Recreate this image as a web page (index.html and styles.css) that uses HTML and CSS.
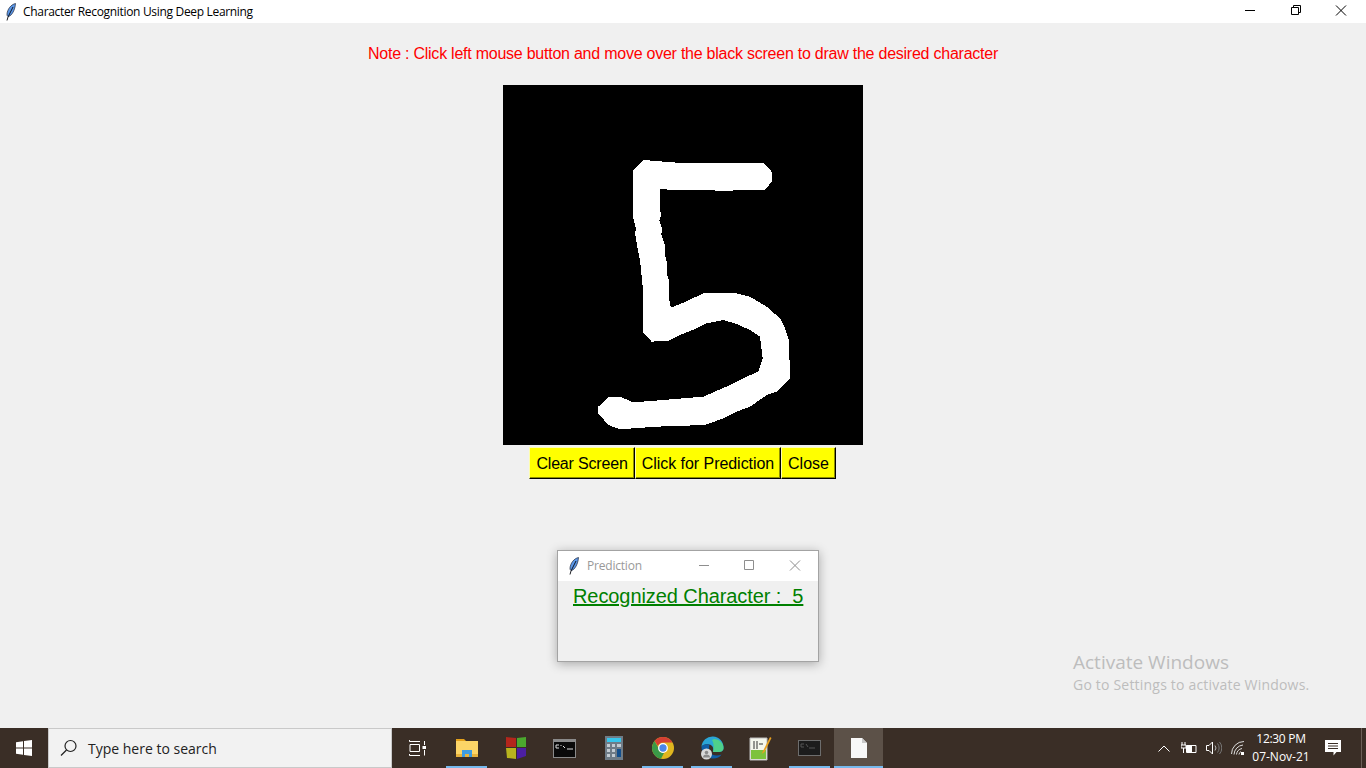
FILE: index.html
```html
<!doctype html>
<html lang="en">
  <head>
    <meta charset="utf-8">
    <title>Character Recognition Using Deep Learning</title>
    <link rel="stylesheet" href="styles.css">
  </head>
  <body>
    <svg class="defs" width="0" height="0">
      <defs>
        <symbol id="feather" viewBox="0 0 12 18">
          <path d="M10.500 .5C6 1.500 2.500 6 2 11C1.900 12.500 2.500 13.500 3.500 13.500C7 12.500 10 7 10.500 .5Z" fill="#5b97e8" stroke="#23283a" stroke-width=".7"/>
          <path d="M8 4L3 14L2 17.500" fill="none" stroke="#05070c" stroke-width=".9"/>
        </symbol>
      </defs>
    </svg>

    <header class="titlebar">
      <svg class="feather" width="12" height="18"><use href="#feather"/></svg>
      <span class="title-text">Character Recognition Using Deep Learning</span>
      <div class="win-controls">
        <svg width="46" height="23" viewBox="0 0 46 23"><path d="M19 10.500H29" stroke="#000" fill="none"/></svg>
        <svg width="46" height="23" viewBox="0 0 46 23"><path d="M19.500 7.500h7v7h-7zM21.500 7.500v-2h7v7h-2" stroke="#000" fill="none"/></svg>
        <svg width="46" height="23" viewBox="0 0 46 23"><path d="M18 5.500L28 15.500M28 5.500L18 15.500" stroke="#000" fill="none"/></svg>
      </div>
    </header>

    <main class="app">
      <p class="note">Note : Click left mouse button and move over the black screen to draw the desired character</p>
      <div class="canvas">
        <svg class="digit" width="210" height="290" viewBox="0 0 630 870" shape-rendering="crispEdges">
          <path fill="#fff" d="M160 30L285 40L415 40L520 38L545 65L545 95L525 120L400 122L290 120L210 118L210 180L214 195L208 210L216 235L214 255L225 285L224 310L232 345L230 370L238 395L236 430L240 465L245 472L280 458L340 430L440 430L480 440L530 470L570 505L585 535L597 570L600 685L560 725L530 735L480 770L440 785L400 805L345 825L200 830L90 838L55 825L25 790L25 770L55 742L95 742L130 757L220 750L340 740L420 705L470 680L505 665L518 625L510 560L480 540L440 522L400 510L350 520L320 535L270 555L235 572L185 575L160 548L160 430L150 330L140 280L135 250L138 238L130 205L130 60Z"/>
        </svg>
      </div>
      <div class="btn-row">
        <button class="btn btn-clear">Clear Screen</button>
        <button class="btn btn-predict">Click for Prediction</button>
        <button class="btn btn-close">Close</button>
      </div>
    </main>

    <section class="dialog">
      <div class="dialog-bar">
        <svg class="feather" width="12" height="18"><use href="#feather"/></svg>
        <span class="dialog-title">Prediction</span>
        <div class="win-controls">
          <svg width="45" height="30" viewBox="0 0 45 30"><path d="M16 14.500H26" stroke="#8e8e8e" fill="none"/></svg>
          <svg width="45" height="30" viewBox="0 0 45 30"><path d="M16.500 9.500h9v9h-9z" stroke="#8e8e8e" fill="none"/></svg>
          <svg width="45" height="30" viewBox="0 0 45 30"><path d="M17 9.500L27 19.500M27 9.500L17 19.500" stroke="#8e8e8e" fill="none"/></svg>
        </div>
      </div>
      <p class="result">Recognized Character :  5</p>
    </section>

    <div class="watermark">
      <div class="wm-big">Activate Windows</div>
      <div class="wm-small">Go to Settings to activate Windows.</div>
    </div>

    <footer class="taskbar">
      <div class="start">
        <svg width="16" height="16" viewBox="0 0 16 16"><path fill="#fff" d="M0 2.300L7 1.300V7.500H0zM8 1.100L16 0V7.500H8zM0 8.500H7V14.700L0 13.700zM8 8.500H16V16L8 14.900z"/></svg>
      </div>
      <div class="search">
        <svg width="18" height="18" viewBox="0 0 18 18"><circle cx="10.500" cy="7" r="5.500" fill="none" stroke="#222" stroke-width="1.200"/><path d="M6.500 11L1 16.500" stroke="#222" stroke-width="1.300"/></svg>
        <span>Type here to search</span>
      </div>
      <div class="task-view">
        <svg width="17" height="16" viewBox="0 0 17 16"><path d="M.5 0V1.500H11M.5 15.500H11M.5 14V15.500M1 4.500H10.500V11.500H1zM15.500 1V5M15.500 10V15.500" fill="none" stroke="#fff"/><rect x="13.500" y="6" width="3.500" height="3" fill="#fff"/></svg>
      </div>

      <div class="slot running">
        <svg width="22" height="20" viewBox="0 0 22 20"><path d="M0 1h8l2 2H0z" fill="#e4a11b"/><rect y="3" width="22" height="16" fill="#fcd567"/><rect y="16" width="22" height="3" fill="#e7b23c"/><path d="M6 19v-7h10v7h-3v-3H9v3z" fill="#3f9ce0"/></svg>
      </div>
      <div class="slot">
        <svg width="22" height="24" viewBox="0 0 22 24"><path d="M1 1L11 2V11H1z" fill="#b3261c"/><path d="M12 2L21 1V11H12z" fill="#4ba82e"/><path d="M1 12H11V23L2 22z" fill="#b8b41e"/><path d="M12 12H21V20L12 23z" fill="#4c1fa3"/></svg>
      </div>
      <div class="slot">
        <svg width="23" height="19" viewBox="0 0 23 19"><rect width="23" height="19" fill="#8a8a8a"/><rect x="1" y="3" width="21" height="15" fill="#0a0a0a"/><path d="M3 6h3M3 6v3h3M8 6v1M8 9v0M10 7l2 2M14 10h6" stroke="#ddd" fill="none"/></svg>
      </div>
      <div class="slot">
        <svg width="18" height="24" viewBox="0 0 18 24"><rect width="18" height="24" fill="#6f7c87"/><rect x="2" y="2" width="14" height="4" fill="#38c6ec"/><path d="M2 8h3v3H2zM7 8h3v3H7zM2 13h3v3H2zM7 13h3v3H7zM2 18h3v3H2zM7 18h3v3H7zM12 8h4v3h-4z" fill="#c3ccd3"/><rect x="12" y="13" width="4" height="8" fill="#134f8c"/></svg>
      </div>
      <div class="slot running">
        <svg width="22" height="22" viewBox="0 0 22 22"><circle cx="11" cy="11" r="11" fill="#e0b61f"/><path d="M11 0A11 11 0 0 1 20.500 5.500H11A5.500 5.500 0 0 0 5.900 9L2.500 4A11 11 0 0 1 11 0Z" fill="#d53f33"/><path d="M2.500 4L6.500 11A5 5 0 0 0 12 16L9 21.800A11 11 0 0 1 2.500 4Z" fill="#3a9a48"/><circle cx="11" cy="11" r="4.300" fill="#4a86e8" stroke="#fff" stroke-width="1.300"/></svg>
      </div>
      <div class="slot running">
        <svg width="24" height="24" viewBox="0 0 24 24"><path d="M1.500 11A11 11 0 0 1 23.500 12C23.500 15 21 16 18 16H13C14 13 13 9 9 8.500C5 8 2.500 9 1.500 11Z" fill="#2aa5d6"/><path d="M14 3C19 3 23.500 7 23.500 12C23.500 15 21 16 18 16H13C14 13 14 7 12 4Z" fill="#4fd08a"/><path d="M1.500 11C1.500 17 6 22.500 13 22.500C17 22.500 20 21 21.500 18.500C18 20 12 20 10 16C8 12 10 9 9 8.500C5 8 2.500 9 1.500 11Z" fill="#0f5fa8"/><circle cx="6.500" cy="18" r="5.500" fill="#d8d8d8"/><circle cx="6.500" cy="16.500" r="1.800" fill="#8a8a8a"/><path d="M3 21.500a3.500 3 0 0 1 7 0z" fill="#8a8a8a"/></svg>
      </div>
      <div class="slot">
        <svg width="23" height="25" viewBox="0 0 23 25"><path d="M1 2H18V24H1z" fill="#f4f6ec" stroke="#bbb"/><path d="M2 14H17V23H2z" fill="#7dc23c"/><path d="M5 5v8M8 5v8M10 8h4" stroke="#333" fill="none"/><path d="M21 1L14 15L12.500 18L15.500 16L22.500 2Z" fill="#e8a01f"/></svg>
      </div>
      <div class="slot running">
        <svg width="23" height="16" viewBox="0 0 23 16"><rect x=".5" y=".5" width="22" height="15" fill="#1c1c1c" stroke="#6d6d6d"/><path d="M3 4h3M3 4v3h3M8 4l2 3M11 8h6" stroke="#555" fill="none"/></svg>
      </div>
      <div class="slot active">
        <svg width="16" height="20" viewBox="0 0 16 20"><path d="M0 0H11L16 5V20H0z" fill="#f8f8f8"/><path d="M11 0L16 5H11z" fill="#c9c9c9"/></svg>
      </div>

      <div class="tray">
        <svg class="tray-caret" width="12" height="7" viewBox="0 0 12 7"><path d="M.5 6.500L6 1L11.500 6.500" fill="none" stroke="#fff"/></svg>
        <svg class="tray-battery" width="16" height="12" viewBox="0 0 16 12"><path d="M5.500 3.500h9.500v7H5.500z" fill="none" stroke="#fff"/><rect x="6" y="4" width="5" height="6" fill="#fff"/><path d="M1 3V0M4 3V0M0 3h5v3H0zM2.500 6v5" stroke="#fff" fill="none"/></svg>
        <svg class="tray-sound" width="16" height="14" viewBox="0 0 16 14"><path d="M.5 4.500h2.500L6.500 1v12L3 9.500H.5z" fill="none" stroke="#fff"/><path d="M9 4.500a4 4 0 0 1 0 5" fill="none" stroke="#bbb"/><path d="M11.500 2.500a7 7 0 0 1 0 9M13.500 1a9 9 0 0 1 0 12" fill="none" stroke="#777"/></svg>
        <svg class="tray-wifi" width="14" height="14" viewBox="0 0 14 14"><path d="M.5 13A12.500 12.500 0 0 1 13 .5M3 13.500A10 10 0 0 1 12 4M5.500 13.500A7 7 0 0 1 11 7.500M8 13.500A4 4 0 0 1 10 10.500" fill="none" stroke="#ddd"/><rect x="10" y="11" width="3" height="3" fill="#fff"/></svg>
        <div class="clock">
          <div class="clock-time">12:30 PM</div>
          <div>07-Nov-21</div>
        </div>
        <svg class="tray-notify" width="16" height="16" viewBox="0 0 16 16"><path d="M0 0H16V12H11.500L8.500 15.500V12H0z" fill="#fff"/><path d="M3 3.500H13M3 6H13M3 8.500H13" stroke="#3b2f27"/></svg>
        <div class="show-desktop"></div>
      </div>
    </footer>
  </body>
</html>
```

FILE: styles.css
```css
* {
  box-sizing: border-box;
}
body {
  margin: 0;
  width: 1366px;
  height: 768px;
  overflow: hidden;
  position: relative;
  background: #f0f0f0;
  font-family: "Liberation Sans", Arial, sans-serif;
  display: flex;
  flex-direction: column;
}
.defs {
  position: absolute;
}
.titlebar {
  height: 23px;
  flex: none;
  background: #fff;
  display: flex;
  align-items: center;
  padding: 0 2px 0 5px;
}
.title-text {
  margin-left: 6px;
  font: 12px "Open Sans", sans-serif;
  letter-spacing: -0.32px;
  color: #000;
}
.win-controls {
  margin-left: auto;
  display: flex;
}
.win-controls svg {
  display: block;
}
.app {
  flex: 1;
  display: flex;
  flex-direction: column;
  align-items: center;
}
.note {
  margin: 22px 0 22px;
  font-size: 16px;
  line-height: 18px;
  letter-spacing: -0.24px;
  color: #f00;
}
.canvas {
  width: 360px;
  height: 360px;
  background: #000;
  padding: 65px 0 0 87px;
}
.digit {
  display: block;
}
.btn-row {
  margin-top: 2px;
  margin-left: -1px;
  display: flex;
}
.btn {
  height: 32px;
  padding: 2px 0 0;
  background: #ff0;
  color: #000;
  border: 0;
  border-top: 1px solid #fdfdb0;
  border-left: 1px solid #fdfdb0;
  border-right: 1px solid #000;
  border-bottom: 1px solid #000;
  box-shadow: inset -1px -1px 0 #8f8f00;
  font: 16px "Liberation Sans", Arial, sans-serif;
}
.btn-clear {
  width: 106px;
  letter-spacing: -0.18px;
}
.btn-predict {
  width: 146px;
  letter-spacing: -0.05px;
}
.btn-close {
  width: 55px;
}
.dialog {
  position: absolute;
  left: 557px;
  top: 550px;
  width: 262px;
  height: 112px;
  background: #f0f0f0;
  border: 1px solid #a3a3a3;
  box-shadow: 0 2px 10px rgba(0,0,0,0.3);
}
.dialog-bar {
  height: 30px;
  background: #fff;
  display: flex;
  align-items: center;
  padding-left: 10px;
}
.dialog-title {
  margin-left: 7px;
  margin-top: -1px;
  font: 12px "Open Sans", sans-serif;
  letter-spacing: -0.2px;
  color: #999;
}
.result {
  margin: 3px 0 0 15px;
  font-size: 20px;
  line-height: 24px;
  letter-spacing: -0.08px;
  color: #008000;
  text-decoration: underline;
  white-space: pre;
}
.watermark {
  position: absolute;
  left: 1073px;
  top: 650px;
  color: #bdbdbd;
  font-family: "Open Sans", sans-serif;
}
.wm-big {
  font-size: 19px;
  line-height: 25px;
}
.wm-small {
  font-size: 14px;
  line-height: 20px;
  letter-spacing: 0.2px;
}
.taskbar {
  height: 40px;
  flex: none;
  background: #3a2e26;
  display: flex;
  align-items: stretch;
}
.start {
  flex: none;
  width: 48px;
  display: flex;
  align-items: center;
  justify-content: center;
}
.search {
  flex: none;
  width: 344px;
  background: #f2f2f2;
  border: 1px solid #c9c9c9;
  display: flex;
  align-items: center;
  padding-left: 11px;
  gap: 10px;
  font: 14px "Open Sans", sans-serif;
  color: #222;
}
.task-view {
  flex: none;
  width: 50px;
  display: flex;
  align-items: center;
  justify-content: center;
}
.slot {
  flex: none;
  width: 49px;
  display: flex;
  align-items: center;
  justify-content: center;
  position: relative;
}
.slot.running::after,
.slot.active::after {
  content: "";
  position: absolute;
  left: 4px;
  right: 4px;
  bottom: 0;
  height: 2px;
  background: #76b9ed;
}
.slot.active {
  background: #5c5148;
}
.slot.active::after {
  left: 0;
  right: 0;
}
.tray {
  flex: 1;
  display: flex;
  align-items: center;
  padding-left: 275px;
  color: #fff;
}
.tray-battery {
  margin-left: 11px;
}
.tray-sound {
  margin-left: 9px;
}
.tray-wifi {
  margin-left: 9px;
}
.clock {
  width: 70px;
  margin-left: 1px;
  text-align: center;
  font: 12px/18px "Open Sans", sans-serif;
}
.clock-time {
  letter-spacing: -0.3px;
}
.tray-notify {
  margin-left: 9px;
}
.show-desktop {
  margin-left: 20px;
  width: 1px;
  height: 40px;
  background: #6b6058;
}
```
